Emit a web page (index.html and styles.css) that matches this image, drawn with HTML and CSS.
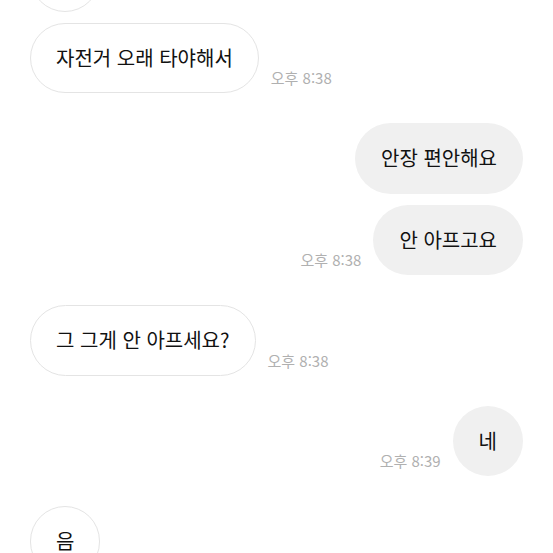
FILE: index.html
```html
<!DOCTYPE html>
<html lang="ko">
<head>
    <meta charset="UTF-8">
    <meta name="viewport" content="width=device-width, initial-scale=1.0">
    <title>채팅</title>
    <link rel="stylesheet" href="styles.css">
</head>
<body>
    <div class="chat">
        <div class="group">
            <div class="row">
                <div class="bubble received">네</div>
            </div>
            <div class="row">
                <div class="bubble received">자전거 오래 타야해서</div>
                <span class="time">오후 8:38</span>
            </div>
        </div>

        <div class="group mine">
            <div class="row">
                <div class="bubble sent">안장 편안해요</div>
            </div>
            <div class="row">
                <span class="time">오후 8:38</span>
                <div class="bubble sent">안 아프고요</div>
            </div>
        </div>

        <div class="group">
            <div class="row">
                <div class="bubble received">그 그게 안 아프세요?</div>
                <span class="time">오후 8:38</span>
            </div>
        </div>

        <div class="group mine">
            <div class="row">
                <span class="time">오후 8:39</span>
                <div class="bubble sent">네</div>
            </div>
        </div>

        <div class="group">
            <div class="row">
                <div class="bubble received">음</div>
            </div>
        </div>
    </div>
</body>
</html>
```

FILE: styles.css
```css
body {
    margin: 0;
    background: #fff;
    font-family: "Noto Sans CJK KR", "Noto Sans", sans-serif;
    color: #111;
    overflow: hidden;
}
.chat {
    display: flex;
    flex-direction: column;
    gap: 30px;
    padding: 0 30px;
    margin-top: -59px;
}
.group {
    display: flex;
    flex-direction: column;
    gap: 11px;
}
.row {
    display: flex;
    align-items: flex-end;
    gap: 12px;
}
.group.mine .row {
    justify-content: flex-end;
}
.bubble {
    font-size: 20px;
    line-height: 26.5px;
    padding: 21px 25px;
    border: 1px solid transparent;
    border-radius: 36px;
    white-space: nowrap;
}
.bubble.received {
    background: #fff;
    border-color: #e4e4e4;
}
.bubble.sent {
    background: #f0f0f0;
}
.time {
    font-size: 15px;
    line-height: 18px;
    color: #b0b0b0;
    margin-bottom: 6px;
    white-space: nowrap;
}
```
